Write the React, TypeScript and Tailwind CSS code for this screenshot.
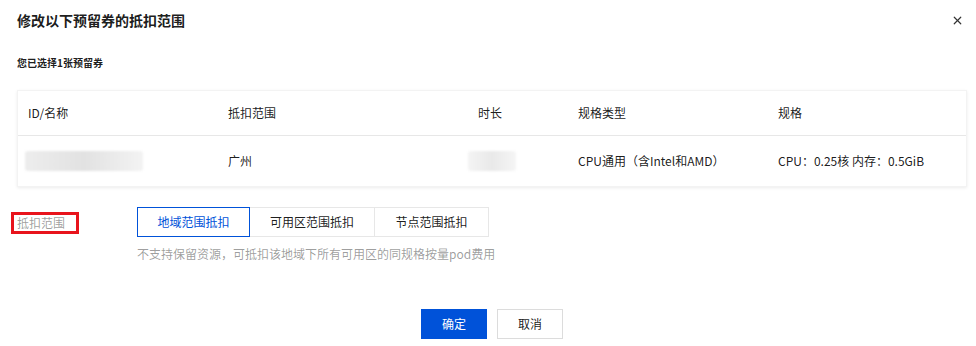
import { X } from "lucide-react";

export default function App() {
  const font = { fontFamily: '"Noto Sans CJK SC", "Liberation Sans", sans-serif' };
  return (
    <div className="w-[976px] h-[346px] bg-white text-[#000000e6] relative" style={font}>
      <div className="flex items-center justify-between pl-[17px] pr-[12px] pt-[6px] h-[34px]">
        <h1 className="text-[14px] font-bold leading-[20px]">修改以下预留券的抵扣范围</h1>
        <X className="w-[13px] h-[13px] text-[#333]" strokeWidth={2.2} />
      </div>
      <div className="pl-[17px] mt-[22px] text-[10px] font-bold leading-[14px]">您已选择1张预留券</div>

      <div className="mx-[17px] mr-[9px] mt-[20px] bg-white shadow-[0_1px_3px_rgba(0,0,0,0.08)] border border-[#f3f3f3] text-[12px] text-[#000000e6]">
        <div className="flex h-[45px] items-center border-b border-[#e7e7e7] text-[#000000e6]">
          <div className="w-[210px] pl-[10px]">ID/名称</div>
          <div className="w-[250px]">抵扣范围</div>
          <div className="w-[100px]">时长</div>
          <div className="w-[200px]">规格类型</div>
          <div className="flex-1">规格</div>
        </div>
        <div className="flex h-[50px] items-center">
          <div className="w-[210px] pl-[7px]">
            <div className="w-[118px] h-[20px] rounded-[3px] bg-gradient-to-r from-[#ededed] via-[#e2e2e2] to-[#f3f3f3] blur-[1px]" />
          </div>
          <div className="w-[250px]">广州</div>
          <div className="w-[100px]">
            <div className="w-[48px] h-[20px] -ml-[10px] rounded-[3px] bg-gradient-to-r from-[#f4f4f4] via-[#e9e9e9] to-[#f5f5f5] blur-[1px]" />
          </div>
          <div className="w-[200px]">CPU通用（含Intel和AMD）</div>
          <div className="flex-1">CPU：0.25核 内存：0.5GiB</div>
        </div>
      </div>

      <div className="flex mt-[20px] pl-[11px]">
        <div className="w-[126px] pt-[5px]">
          <div className="w-[68px] h-[22px] border-[3px] border-[#e8141c] pl-[3px] text-[12px] leading-[16px] text-[#00000066]">
            抵扣范围
          </div>
        </div>
        <div>
          <div className="flex text-[12px] h-[30px]">
            <div className="w-[113px] flex items-center justify-center border border-[#0052d9] text-[#0052d9]">地域范围抵扣</div>
            <div className="w-[125px] flex items-center justify-center border border-l-0 border-[#e7e7e7]">可用区范围抵扣</div>
            <div className="w-[114px] flex items-center justify-center border border-l-0 border-[#e7e7e7]">节点范围抵扣</div>
          </div>
          <div className="mt-[8px] text-[12px] leading-[18px] text-[#00000066]">
            不支持保留资源，可抵扣该地域下所有可用区的同规格按量pod费用
          </div>
        </div>
      </div>

      <div className="flex justify-center gap-[10px] mt-[46px] pl-[8px] text-[12px]">
        <button className="w-[66px] h-[30px] bg-[#0052d9] text-white">确定</button>
        <button className="w-[66px] h-[30px] border border-[#dcdcdc] bg-white text-[#000000e6]">取消</button>
      </div>
    </div>
  );
}
